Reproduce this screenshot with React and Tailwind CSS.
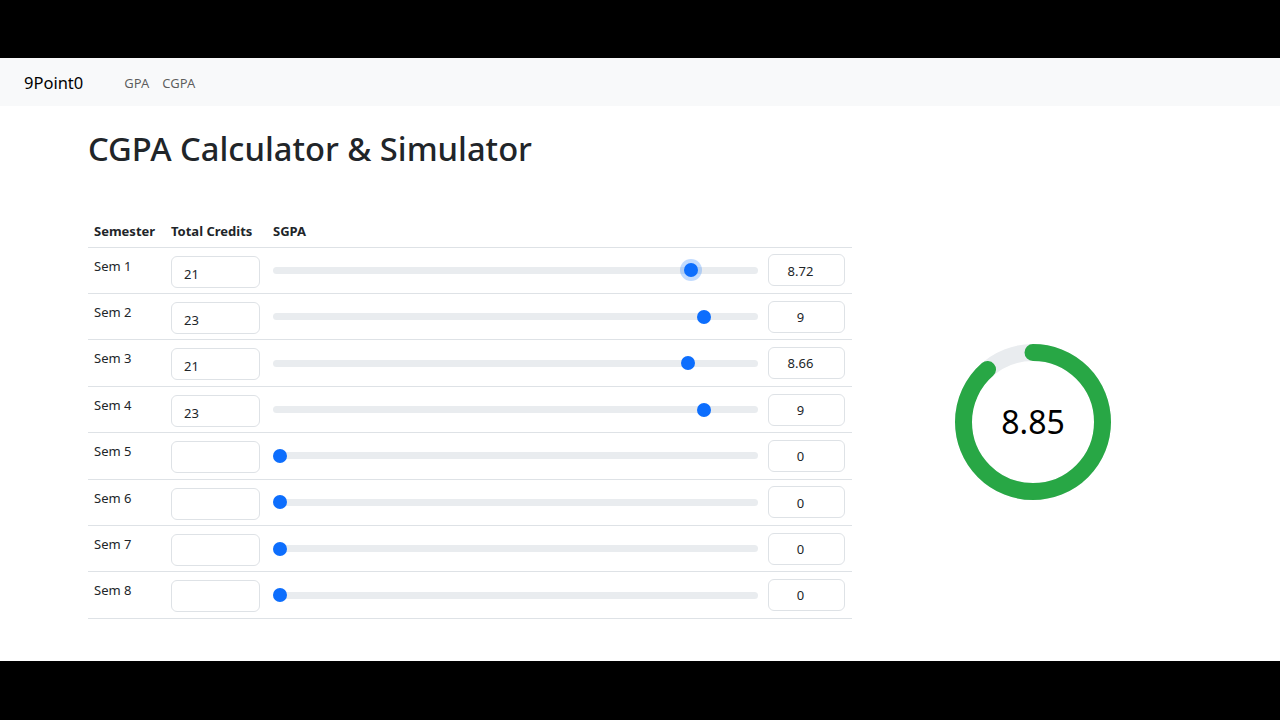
const sems = [
  { name: 'Sem 1', credits: '21', sgpa: 8.72, label: '8.72', focus: true },
  { name: 'Sem 2', credits: '23', sgpa: 9, label: '9' },
  { name: 'Sem 3', credits: '21', sgpa: 8.66, label: '8.66' },
  { name: 'Sem 4', credits: '23', sgpa: 9, label: '9' },
  { name: 'Sem 5', credits: '', sgpa: 0, label: '0' },
  { name: 'Sem 6', credits: '', sgpa: 0, label: '0' },
  { name: 'Sem 7', credits: '', sgpa: 0, label: '0' },
  { name: 'Sem 8', credits: '', sgpa: 0, label: '0' },
]

const Slider = ({ value, focus }) => (
  <div className="relative h-[14px] w-full flex items-center">
    <div className="h-[7px] w-full rounded-full bg-[#e9ecef]"></div>
    <div
      className={
        'absolute top-0 h-[14px] w-[14px] rounded-full bg-[#0d6efd] ' +
        (focus ? 'ring-4 ring-[#0d6efd]/25' : '')
      }
      style={{ left: `calc((100% - 14px) * ${value / 10})` }}
    ></div>
  </div>
)

const Donut = ({ value }) => {
  const r = 69.5
  const c = 2 * Math.PI * r
  const pct = value / 10
  return (
    <div className="relative w-[160px] h-[160px]">
      <svg width="160" height="160" viewBox="0 0 160 160" className="-rotate-90">
        <circle cx="80" cy="80" r={r} fill="none" stroke="#e9ecef" strokeWidth="17" />
        <circle
          cx="80"
          cy="80"
          r={r}
          fill="none"
          stroke="#28a745"
          strokeWidth="17"
          strokeLinecap="round"
          strokeDasharray={`${c * pct} ${c}`}
        />
      </svg>
      <div className="absolute inset-0 flex items-center justify-center text-[32px] text-black">
        {value.toFixed(2)}
      </div>
    </div>
  )
}

export default function App() {
  return (
    <div className="h-[720px] w-[1280px] bg-black flex flex-col font-['Noto_Sans',sans-serif] text-[#212529]">
      <div className="h-[58px]"></div>
      <nav className="h-[48px] bg-[#f8f9fa] flex items-center px-6 pt-[3px]">
        <a className="text-[16.5px] text-black mr-[41px]">9Point0</a>
        <div className="flex gap-[13px] text-[13px] text-black/65">
          <a>GPA</a>
          <a>CGPA</a>
        </div>
      </nav>
      <main className="flex-1 bg-white px-[88px]">
        <h1 className="text-[32.7px] leading-none mt-[27px] font-medium text-[#212529]">CGPA Calculator &amp; Simulator</h1>
        <div className="flex items-center mt-[52px]">
          <div className="w-[764px] text-[13px]">
            <div className="flex h-[30px] items-center border-b border-[#dee2e6] font-bold">
              <div className="w-[75px] pl-[6px]">Semester</div>
              <div className="w-[110px] pl-[8px]">Total Credits</div>
              <div>SGPA</div>
            </div>
            {sems.map((s) => (
              <div key={s.name} className="flex h-[46.4px] border-b border-[#dee2e6]">
                <div className="w-[75px] pl-[6px] pt-[8px] leading-[20px]">{s.name}</div>
                <div className="w-[110px] pl-[8px] pt-[8px]">
                  <div className="w-[89px] h-[32px] border border-[#dee2e6] rounded-[6px] px-3 pt-[7px] leading-[20px]">
                    {s.credits}
                  </div>
                </div>
                <div className="w-[485px] flex items-center">
                  <Slider value={s.sgpa} focus={s.focus} />
                </div>
                <div className="pl-[10px] flex items-center">
                  <div className="w-[77px] h-[32px] border border-[#dee2e6] rounded-[6px] flex items-center justify-center pt-[2px] pr-[12px]">
                    {s.label}
                  </div>
                </div>
              </div>
            ))}
          </div>
          <div className="ml-[101px] mt-[8px]">
            <Donut value={8.85} />
          </div>
        </div>
      </main>
      <div className="h-[59px]"></div>
    </div>
  )
}
